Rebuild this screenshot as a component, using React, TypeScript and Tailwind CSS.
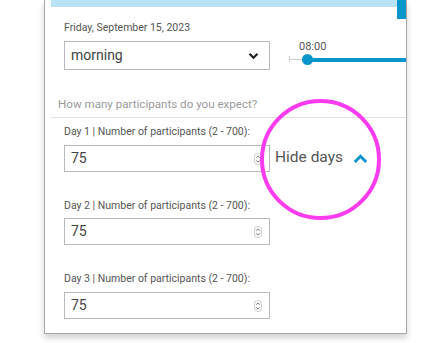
import React from "react";

function Spinner() {
  return (
    <svg width="8" height="12" viewBox="0 0 8 12" className="shrink-0">
      <rect x="0.5" y="0.5" width="7" height="11" rx="3" fill="#fafafa" stroke="#cfcfcf" />
      <path d="M2.3 4.6 L4 2.9 L5.7 4.6" fill="none" stroke="#666" strokeWidth="0.9" />
      <path d="M2.3 7.4 L4 9.1 L5.7 7.4" fill="none" stroke="#666" strokeWidth="0.9" />
    </svg>
  );
}

function NumberInput() {
  return (
    <div className="w-[206px] h-[27px] border border-[#b9b9b9] flex items-center pl-[6px] pr-[7px] justify-between bg-white">
      <span className="text-[14px] text-[#444]">75</span>
      <Spinner />
    </div>
  );
}

export default function App() {
  return (
    <div
      className="w-[445px] h-[343px] bg-white relative overflow-hidden"
      style={{ fontFamily: "Roboto, 'Liberation Sans', sans-serif" }}
    >
      <div className="ml-[44px] w-[363px] h-[334px] border-x-[1.5px] border-b-[1.5px] border-[#a9a9a9] shadow-[0_4px_6px_rgba(0,0,0,0.18)] overflow-hidden">
        <div className="flex h-[7px] items-start">
          <div className="ml-[6px] flex-1 h-[7px] bg-[#b9e2f2]" />
          <div className="w-[9px] h-[19px] bg-[#0996cb] relative z-10" />
        </div>
        <div className="pl-[19px]">
          <div className="mt-[14px] text-[10.5px] leading-[14px] text-[#555]">Friday, September 15, 2023</div>
          <div className="flex mt-[6px]">
            <div className="w-[206px] h-[29px] border border-[#b9b9b9] flex items-center justify-between pl-[6px] pr-[10px]">
              <span className="text-[14px] text-[#444]">morning</span>
              <svg width="11" height="8" viewBox="0 0 11 8">
                <path d="M1.5 1.8 L5.5 5.8 L9.5 1.8" fill="none" stroke="#222" strokeWidth="2.2" />
              </svg>
            </div>
            <div className="ml-[19px] flex-1 relative">
              <div className="absolute left-[10px] top-[-2px] text-[11px] text-[#555]">08:00</div>
              <div className="absolute left-0 top-[18px] w-[20px] h-px bg-[#ccc]" />
              <div className="absolute left-0 top-[15px] w-px h-[6px] bg-[#ccc]" />
              <div className="absolute left-[18px] top-[17px] right-0 h-[4px] bg-[#0a96cb]" />
              <div className="absolute left-[13px] top-[13px] w-[11px] h-[11px] rounded-full bg-[#0a96cb]" />
            </div>
          </div>
        </div>
        <div className="pl-[13px] mt-[27px] text-[11.6px] leading-[14px] text-[#9a9a9a]">How many participants do you expect?</div>
        <div className="ml-[6px] mt-[6px] border-t border-[#e2e2e2]" />
        <div className="pl-[19px]">
          <div className="mt-[7px] text-[10.5px] leading-[14px] text-[#555]">Day 1 | Number of participants (2 - 700):</div>
          <div className="flex items-center mt-[6px]">
            <NumberInput />
            <span className="ml-[5px] text-[15.5px] text-[#555] leading-none mb-[2px]">Hide days</span>
            <svg width="15" height="10" viewBox="0 0 15 10" className="ml-[10px]">
              <path d="M1.8 8 L7.5 2.3 L13.2 8" fill="none" stroke="#0a96cb" strokeWidth="3" />
            </svg>
          </div>
          <div className="mt-[27px] text-[10.5px] leading-[14px] text-[#555]">Day 2 | Number of participants (2 - 700):</div>
          <div className="mt-[5px]">
            <NumberInput />
          </div>
          <div className="mt-[27px] text-[10.5px] leading-[14px] text-[#555]">Day 3 | Number of participants (2 - 700):</div>
          <div className="mt-[6px]">
            <NumberInput />
          </div>
        </div>
      </div>
      <div className="absolute left-[260px] top-[99px] w-[121px] h-[121px] rounded-full border-[4px] border-[#fb3bef]" />
    </div>
  );
}
